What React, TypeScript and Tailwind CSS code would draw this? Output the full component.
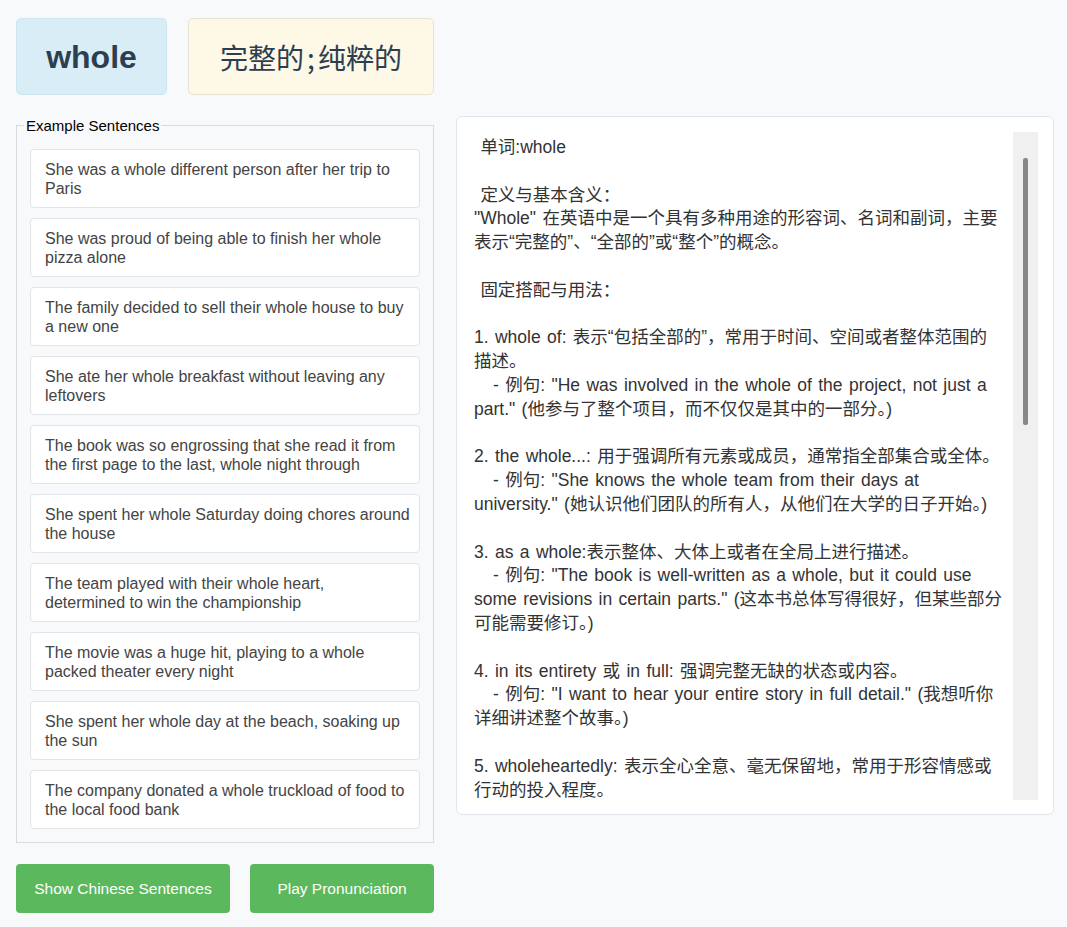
import React from 'react';

const sentences = [
  'She was a whole different person after her trip to Paris',
  'She was proud of being able to finish her whole pizza alone',
  'The family decided to sell their whole house to buy a new one',
  'She ate her whole breakfast without leaving any leftovers',
  'The book was so engrossing that she read it from the first page to the last, whole night through',
  'She spent her whole Saturday doing chores around the house',
  'The team played with their whole heart,\ndetermined to win the championship',
  'The movie was a huge hit, playing to a whole packed theater every night',
  'She spent her whole day at the beach, soaking up the sun',
  'The company donated a whole truckload of food to the local food bank',
];

const explanation = ` 单词:whole

 定义与基本含义：
"Whole" 在英语中是一个具有多种用途的形容词、名词和副词，主要表示“完整的”、“全部的”或“整个”的概念。

 固定搭配与用法：

1. whole of: 表示“包括全部的”，常用于时间、空间或者整体范围的描述。
   - 例句: "He was involved in the whole of the project, not just a part." (他参与了整个项目，而不仅仅是其中的一部分。)

2. the whole...: 用于强调所有元素或成员，通常指全部集合或全体。
   - 例句: "She knows the whole team from their days at university." (她认识他们团队的所有人，从他们在大学的日子开始。)

3. as a whole:表示整体、大体上或者在全局上进行描述。
   - 例句: "The book is well-written as a whole, but it could use some revisions in certain parts." (这本书总体写得很好，但某些部分可能需要修订。)

4. in its entirety 或 in full: 强调完整无缺的状态或内容。
   - 例句: "I want to hear your entire story in full detail." (我想听你详细讲述整个故事。)

5. wholeheartedly: 表示全心全意、毫无保留地，常用于形容情感或行动的投入程度。
   - 例句: "She threw herself wholeheartedly into the new job." (她全心全意地投入到新工作中。)

 近义词：
entire, complete, total, full
`;

export default function App() {
  return (
    <div className="min-h-screen bg-[#f8f9fb] font-['Liberation_Sans','Noto_Sans_CJK_SC',sans-serif]">
      <div className="flex gap-[22px] pl-[16px] pt-[18px]">
        {/* Left column */}
        <div className="w-[418px] shrink-0">
          <div className="flex gap-[21px]">
            <div className="flex h-[77px] w-[151px] items-center justify-center rounded-[5px] border border-[#cfe6f2] bg-[#d9edf7]">
              <span className="text-[32px] font-bold text-[#2c3e50]">whole</span>
            </div>
            <div className="flex h-[77px] w-[246px] items-center justify-center rounded-[5px] border border-[#e6e3d6] bg-[#fef8e6]">
              <span className="font-['Noto_Sans_CJK_SC',sans-serif] text-[28px] text-[#2c3e50]">
                完整的<span className="mx-[3px]">;</span>纯粹的
              </span>
            </div>
          </div>

          <fieldset className="mt-[22px] border border-[#d9dcdf] px-[13px] pb-[13px]">
            <legend className="-ml-[6px] px-[2px] text-[15px] leading-[17px] text-black">Example Sentences</legend>
            <div className="flex flex-col gap-[10px] pt-[15px]">
              {sentences.map((s) => (
                <div
                  key={s}
                  className="whitespace-pre-line rounded-[4px] border border-[#e1e4e8] bg-white pb-[9px] pl-[14px] pr-[6px] pt-[10px] text-[16px] leading-[19px] text-[#444]"
                >
                  {s}
                </div>
              ))}
            </div>
          </fieldset>

          <div className="mt-[21px] flex gap-[20px]">
            <button className="h-[49px] w-[214px] rounded-[4px] bg-[#5cb85c] text-[15.5px] text-white">
              Show Chinese Sentences
            </button>
            <button className="h-[49px] w-[184px] rounded-[4px] bg-[#5cb85c] text-[15.5px] text-white">
              Play Pronunciation
            </button>
          </div>
        </div>

        {/* Right panel */}
        <div className="mt-[98px] w-[598px] shrink-0 self-start rounded-[6px] border border-[#e1e6ec] bg-white px-[15px] pb-[14px] pt-[15px]">
          <div className="flex h-[668px]">
            <div className="flex-1 overflow-hidden whitespace-pre-wrap pl-[2px] pr-[10px] pt-[4px] text-[17.5px] leading-[23.8px] text-[#333] [word-spacing:1.5px]">
              {explanation}
            </div>
            <div className="w-[25px] shrink-0 bg-[#f0f0f0]">
              <div className="ml-[10px] mt-[26px] h-[267px] w-[5px] rounded-[2px] bg-[#888]" />
            </div>
          </div>
        </div>
      </div>
    </div>
  );
}
